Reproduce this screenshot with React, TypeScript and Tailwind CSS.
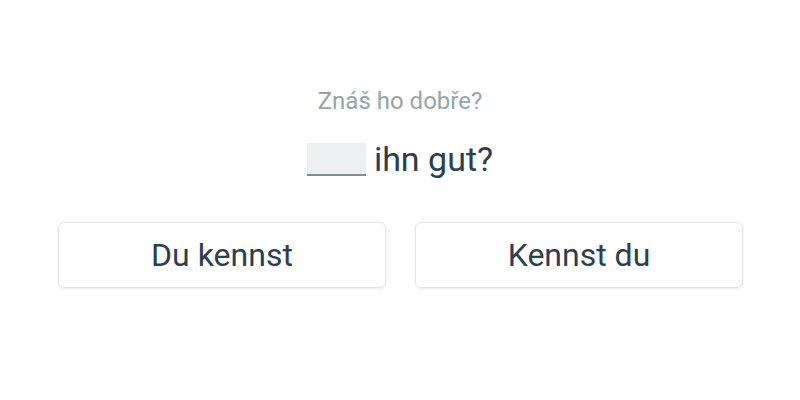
export default function App() {
  return (
    <div
      className="w-full h-[400px] bg-white flex flex-col items-center"
      style={{ fontFamily: 'Roboto, "Noto Sans", sans-serif' }}
    >
      <p className="mt-[86px] text-[24px] leading-[30px] text-[#95a5a6]">Znáš ho dobře?</p>
      <div className="mt-[23px] flex items-center text-[34px] leading-[40px] text-[#2c3e50]">
        <span className="inline-block w-[59px] h-[33px] bg-[#ecf0f1] border-b-2 border-[#7f8c8d] mr-[8px]" />
        <span>ihn gut?</span>
      </div>
      <div className="mt-[43px] w-full pl-[58px] pr-[57px] grid grid-cols-2 gap-[29px]">
        <button className="h-[66px] rounded-[6px] border border-[#e3e6e8] bg-white shadow-[0_1px_3px_rgba(0,0,0,0.08)] text-[32px] text-[#2c3e50]">
          Du kennst
        </button>
        <button className="h-[66px] rounded-[6px] border border-[#e3e6e8] bg-white shadow-[0_1px_3px_rgba(0,0,0,0.08)] text-[32px] text-[#2c3e50]">
          Kennst du
        </button>
      </div>
    </div>
  );
}
